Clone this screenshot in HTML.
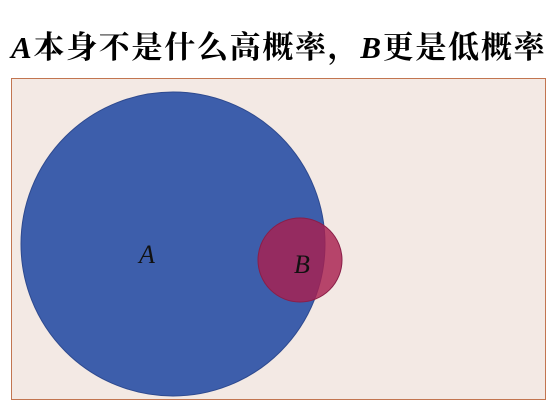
<!DOCTYPE html>
<html><head><meta charset="utf-8"><style>
html,body{margin:0;padding:0;background:#fff;width:552px;height:402px;overflow:hidden}
.t{position:absolute;left:11px;top:22px;font:bold 31px "Liberation Serif","Noto Serif CJK SC",serif;color:#000;white-space:nowrap;letter-spacing:1.7px}
i{font-family:"Liberation Serif",serif}
</style></head><body>
<div class="t"><i>A</i>本身不是什么高概率，<i>B</i>更是低概率</div>
<svg style="position:absolute;left:0;top:0" width="552" height="402">
<rect x="11.5" y="78.5" width="534" height="321" fill="#f3e9e4" stroke="#c27550" stroke-width="1"/>
<circle cx="173" cy="244" r="152" fill="#3d5eab" stroke="#2e4a8f" stroke-width="1"/>
<circle cx="300" cy="260" r="42" fill="#a8204f" fill-opacity="0.82" stroke="#8a1e48" stroke-width="1"/>
<text x="139" y="263" font-family="Liberation Serif" font-style="italic" font-size="26" fill="#111">A</text>
<text x="294" y="273" font-family="Liberation Serif" font-style="italic" font-size="26" fill="#111">B</text>
</svg>
</body></html>
